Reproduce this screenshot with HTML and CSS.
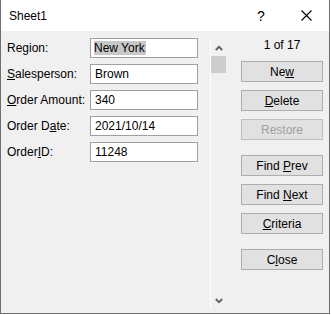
FILE: index.html
```html
<!DOCTYPE html>
<html lang="en">
<head>
	<meta charset="UTF-8">
	<title>Sheet1</title>
	<link rel="stylesheet" href="styles.css">
</head>
<body>

	<div id="dialog">
		<div class="titlebar">
			<span class="caption">Sheet1</span>
			<span class="capbtn help">?</span>
			<span class="capbtn close">
				<svg width="11" height="11" viewBox="0 0 11 11"><path d="M0.5 0.5L10.5 10.5M10.5 0.5L0.5 10.5" stroke="#000" stroke-width="1.1" fill="none"/></svg>
			</span>
		</div>

		<div class="body">
			<div class="fields">
				<div class="row">
					<label>Re<u>g</u>ion:</label>
					<div class="box"><span class="sel">New York</span></div>
				</div>
				<div class="row">
					<label><u>S</u>alesperson:</label>
					<div class="box">Brown</div>
				</div>
				<div class="row">
					<label><u>O</u>rder Amount:</label>
					<div class="box">340</div>
				</div>
				<div class="row">
					<label>Order D<u>a</u>te:</label>
					<div class="box">2021/10/14</div>
				</div>
				<div class="row">
					<label>Order<u>I</u>D:</label>
					<div class="box">11248</div>
				</div>
			</div>

			<div class="scroll">
				<div class="arrow">
					<svg width="8" height="6" viewBox="0 0 8 6"><path d="M0.8 5L4 1.8L7.2 5" stroke="#606060" stroke-width="1.8" fill="none"/></svg>
				</div>
				<div class="thumb"></div>
				<div class="track"></div>
				<div class="arrow">
					<svg width="8" height="6" viewBox="0 0 8 6"><path d="M0.8 1L4 4.2L7.2 1" stroke="#606060" stroke-width="1.8" fill="none"/></svg>
				</div>
			</div>

			<div class="actions">
				<div class="count">1 of 17</div>
				<button>Ne<u>w</u></button>
				<button><u>D</u>elete</button>
				<button class="off">Restore</button>
				<button class="sep">Find <u>P</u>rev</button>
				<button>Find <u>N</u>ext</button>
				<button><u>C</u>riteria</button>
				<button class="sep">C<u>l</u>ose</button>
			</div>
		</div>
	</div>

</body>
</html>
```

FILE: styles.css
```css
body{
	margin: 0;
	background-color: #fff;
	font-family: "Liberation Sans", Arial, sans-serif;
	font-size: 12px;
	color: #000;
}
#dialog{
	width: 328px;
	height: 313px;
	border: 1px solid #707070;
	border-top: none;
	background-color: #f0f0f0;
	display: flex;
	flex-direction: column;
}
.titlebar{
	height: 31px;
	background-color: #fff;
	display: flex;
	align-items: center;
}
.caption{
	flex: 1;
	padding-left: 8px;
	font-size: 12px;
}
.capbtn{
	width: 46px;
	height: 31px;
	display: flex;
	align-items: center;
	justify-content: center;
}
.help{
	font-size: 14px;
	margin-right: -1px;
}
.close{
	width: 45px;
	padding-left: 1px;
	padding-bottom: 1px;
}
.body{
	flex: 1;
	display: flex;
}
.fields{
	width: 203px;
	padding: 7px 0 0 6px;
	display: flex;
	flex-direction: column;
	gap: 6px;
}
.row{
	height: 20px;
	display: flex;
	align-items: center;
}
label{
	width: 83px;
}
.box{
	width: 102px;
	height: 18px;
	border: 1px solid #a0a0a0;
	background-color: #fff;
	padding-left: 4px;
	display: flex;
	align-items: center;
}
.sel{
	background-color: #c8c8c8;
	line-height: 14px;
	padding-right: 1px;
	margin-left: -1px;
}
.scroll{
	width: 16px;
	margin: 8px 0 4px;
	border-left: 1px solid #fff;
	display: flex;
	flex-direction: column;
}
.arrow{
	height: 17px;
	display: flex;
	align-items: center;
	justify-content: center;
}
.thumb{
	height: 17px;
	margin-right: 1px;
	background-color: #cdcdcd;
}
.track{
	flex: 1;
}
.actions{
	flex: 1;
	padding: 7px 6px 0 14px;
	display: flex;
	flex-direction: column;
	gap: 8px;
}
.count{
	height: 14px;
	line-height: 14px;
	text-align: center;
	margin-bottom: 1px;
}
button{
	height: 21px;
	padding: 0;
	border: 1px solid #adadad;
	background-color: #e1e1e1;
	font-family: inherit;
	font-size: 12px;
	color: #000;
}
.off{
	color: #a0a0a0;
	border-color: #bfbfbf;
}
.sep{
	margin-top: 7px;
}
```
